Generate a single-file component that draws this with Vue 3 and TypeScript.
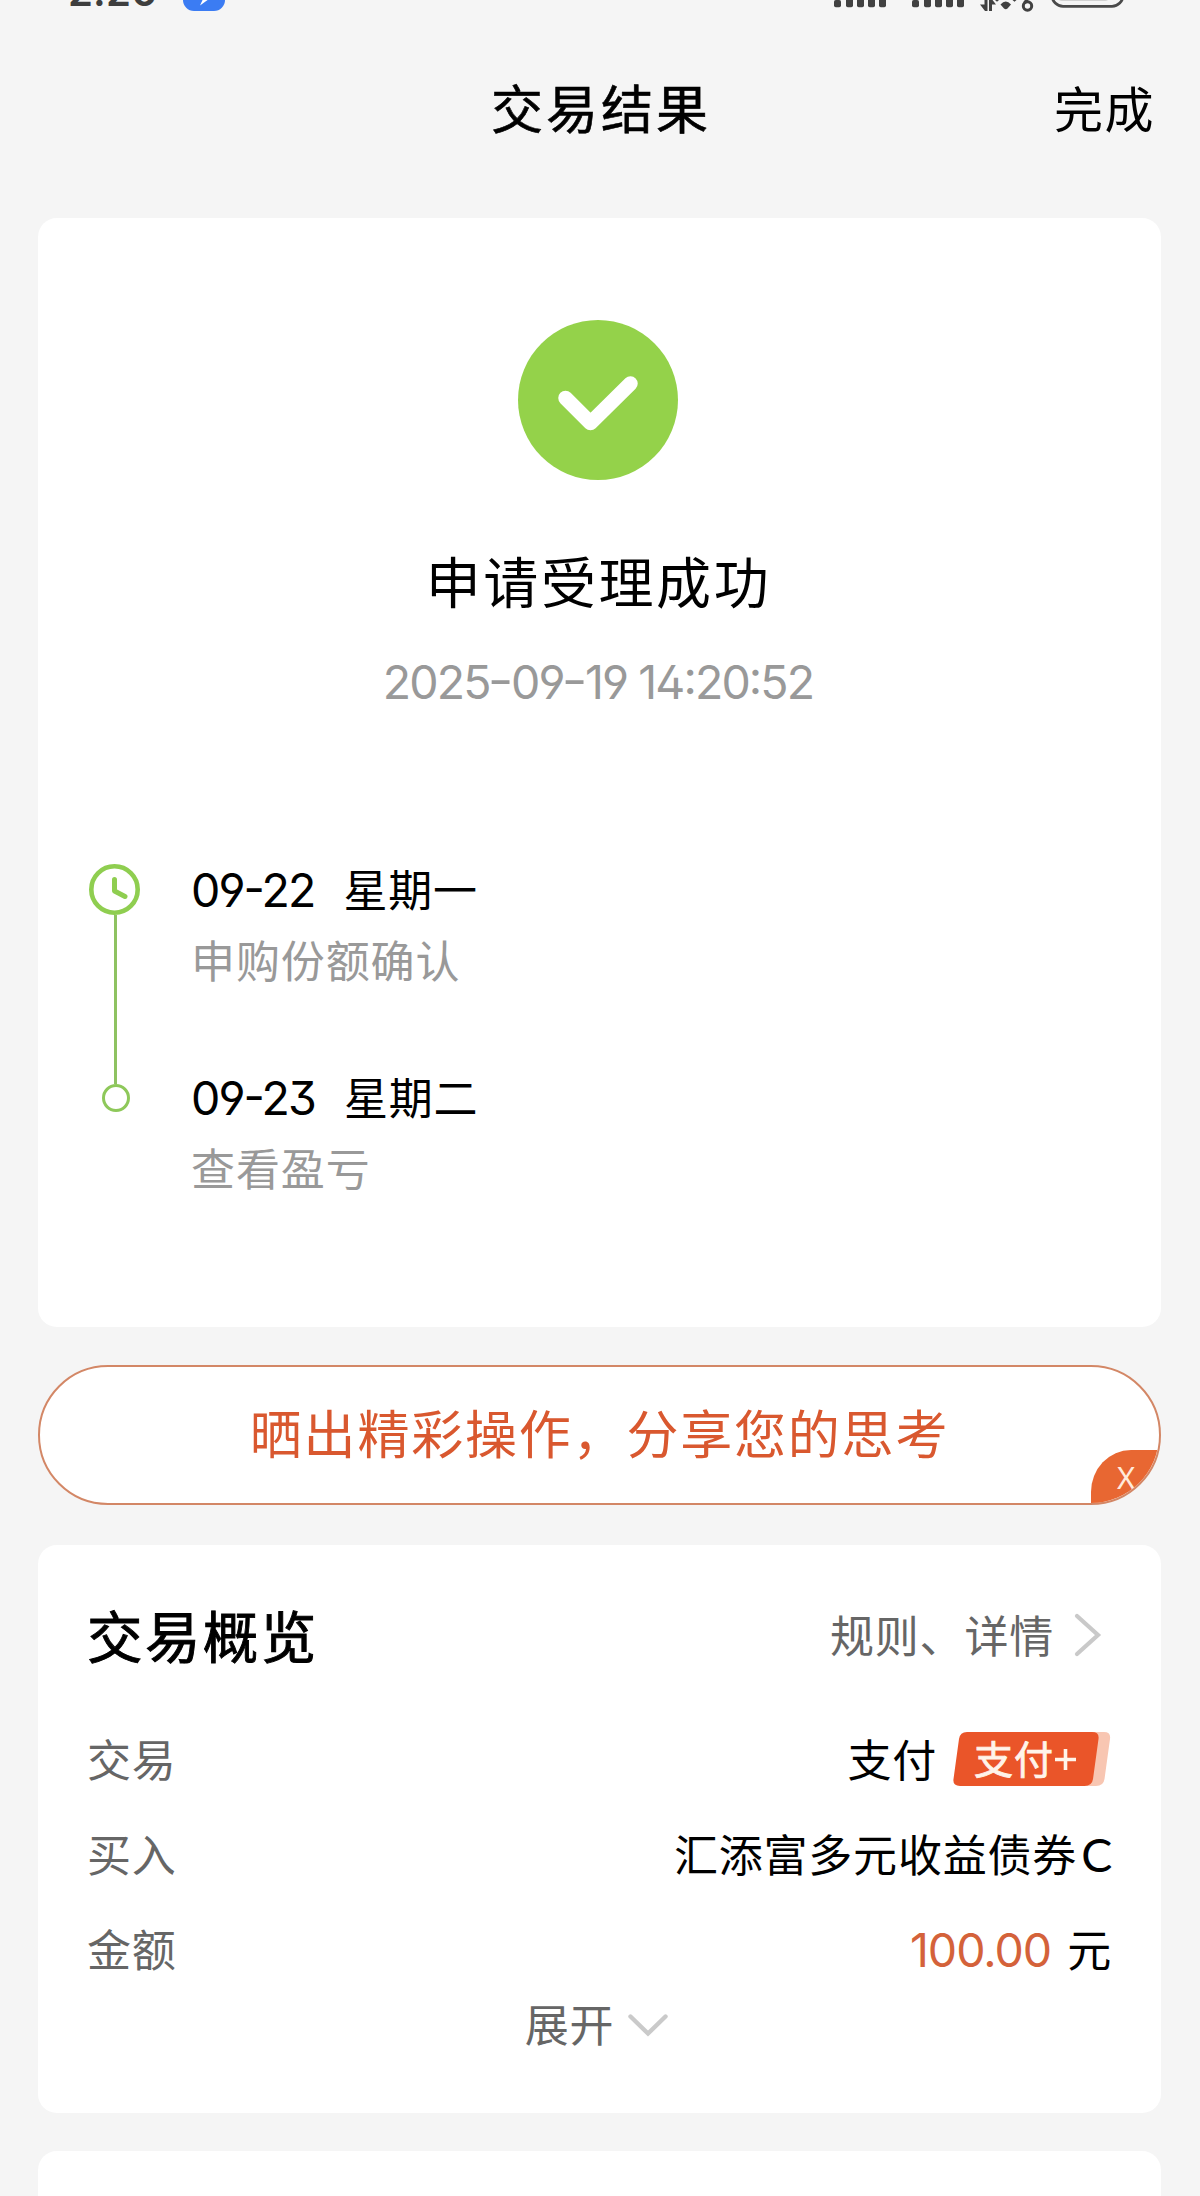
<script setup lang="ts">
interface Step {
  date: string
  weekday: string
  label: string
}

const steps: Step[] = [
  { date: '09-22', weekday: '星期一', label: '申购份额确认' },
  { date: '09-23', weekday: '星期二', label: '查看盈亏' },
]

const signalBars: number[] = [34, 46, 57, 68, 79]
</script>

<template>
  <div class="page">
    <div class="status">
      <span class="clock">2:20</span>
      <svg class="app-badge" width="42" height="12" viewBox="0 0 42 12">
        <rect x="0" y="-30" width="42" height="41" rx="11" fill="#3b7cf3" />
        <path d="M17 5.500 L20 -1 L26 -1 Z" fill="#fff" />
      </svg>
      <svg class="indicators" width="330" height="14" viewBox="0 0 330 14">
        <g fill="#414141">
          <g v-for="offset in [0, 78]" :key="offset" :transform="`translate(${offset} 0)`">
            <rect
              v-for="(x, i) in signalBars"
              :key="x"
              :x="x"
              :y="i === 0 ? 0 : -14"
              width="7"
              :height="i === 0 ? 7.3 : 21.3"
              rx="1.8"
            />
          </g>
          <path d="M180 4.500 L184.500 4.500 L184.500 -2 L187.500 -2 L187.500 11 L185 11 Z" />
          <path d="M189 11 L189 -2 L191 -2 L196 4.500 L192 4.500 L192 11 Z" />
          <path d="M200.500 4.500 Q205.800 -1.500 211 4.500 L207.500 8.500 Q205.800 10 204 8.500 Z" />
          <path d="M195 0 L199 0 L197 1.800 Z M212.500 0 L216.500 0 L214.500 1.800 Z" />
        </g>
        <path d="M229 -3 L224.500 3" stroke="#414141" stroke-width="3" fill="none" />
        <circle cx="227.500" cy="6" r="4.200" fill="none" stroke="#414141" stroke-width="3" />
        <rect x="252" y="-28" width="71" height="34.300" rx="11" fill="#f5f5f5" stroke="#4a4a4a" stroke-width="2.800" />
        <rect x="257" y="-22" width="53" height="23" rx="5" fill="#d2d2d2" />
      </svg>
    </div>

    <header class="header">
      <h1>交易结果</h1>
      <button class="done" type="button">完成</button>
    </header>

    <section class="card result">
      <div class="summary">
        <svg width="160" height="160" viewBox="0 0 160 160">
          <circle cx="80" cy="80" r="80" fill="#94d24a" />
          <path
            d="M47.500 78 L72.500 103 L112.500 63.500"
            fill="none"
            stroke="#fff"
            stroke-width="14.500"
            stroke-linecap="round"
            stroke-linejoin="round"
          />
        </svg>
        <h2>申请受理成功</h2>
        <time>2025<i>-</i>09<i>-</i>19 14:20:52</time>
      </div>

      <div class="timeline">
        <div class="rail">
          <svg width="51" height="51" viewBox="0 0 51 51" fill="none" stroke="#8fce50">
            <circle cx="25.500" cy="25.500" r="23.200" stroke-width="4.600" />
            <path d="M25.500 15.500 V27 L36 32.500" stroke-width="5" stroke-linecap="round" stroke-linejoin="round" />
          </svg>
          <span class="line"></span>
          <span class="dot"></span>
        </div>
        <div class="steps">
          <div v-for="step in steps" :key="step.date" class="step">
            <p class="when"><span class="num">{{ step.date }}</span><span class="weekday">{{ step.weekday }}</span></p>
            <p class="what">{{ step.label }}</p>
          </div>
        </div>
      </div>
    </section>

    <section class="share">
      <span>晒出精彩操作，分享您的思考</span>
      <button class="close" type="button">X</button>
    </section>

    <section class="card overview">
      <div class="overview-head">
        <h2>交易概览</h2>
        <a class="rules">
          <span>规则、详情</span>
          <svg width="28" height="44" viewBox="0 0 28 44">
            <path d="M3 3 L24 22 L3 41" fill="none" stroke="#c9c9c9" stroke-width="4.200" stroke-linecap="round" />
          </svg>
        </a>
      </div>
      <div class="row">
        <span class="label">交易</span>
        <span class="value">
          支付
          <svg class="pay" width="158" height="54" viewBox="0 0 158 54">
            <path d="M28 0 H151 Q158 0 157 7 L151.500 47 Q150.500 54 143 54 H28 Z" fill="#f8c6b2" />
            <path d="M14 0 H139 Q146.500 0 145.500 7 L140 47 Q139 54 131.500 54 H7 Q-0.500 54 0.500 47 L6 7 Q7 0 14 0 Z" fill="#ea5529" />
            <text x="21" y="42" class="pay-text">支付</text>
            <path d="M102 27.500 H123 M112.500 17 V38" stroke="#fff4ea" stroke-width="3.600" fill="none" />
          </svg>
        </span>
      </div>
      <div class="row">
        <span class="label">买入</span>
        <span class="value">汇添富多元收益债券<span class="share-class">C</span></span>
      </div>
      <div class="row">
        <span class="label">金额</span>
        <span class="value"><span class="amount">100.00</span>元</span>
      </div>
      <div class="expand">
        <span>展开</span>
        <svg width="40" height="24" viewBox="0 0 40 24">
          <path d="M2.500 2.500 L20 19.500 L37.500 2.500" fill="none" stroke="#cacaca" stroke-width="4.400" stroke-linecap="round" />
        </svg>
      </div>
    </section>

    <section class="card next"></section>
  </div>
</template>

<style>
body {
  margin: 0;
  background: #f5f5f5;
}
</style>

<style scoped>
.page {
  width: 1200px;
  height: 2196px;
  overflow: hidden;
  box-sizing: border-box;
  padding: 0 39px 0 38px;
  background: #f5f5f5;
  color: #000;
  font-family: Inter, 'Noto Sans CJK SC', sans-serif;
  font-size: 44px;
  letter-spacing: 0.8px;
}

h1,
h2,
p {
  margin: 0;
  font-weight: 400;
}

button {
  border: 0;
  padding: 0;
  background: none;
  font-family: inherit;
}

.status {
  height: 20px;
  display: flex;
  align-items: flex-start;
  overflow: hidden;
  margin: 0 -39px 0 -38px;
  padding-left: 68px;
}

.clock {
  width: 115px;
  margin-top: -31px;
  font-size: 40px;
  line-height: 46px;
  font-weight: 600;
  letter-spacing: 0.2px;
  color: #3e3e3e;
}

.app-badge {
  flex: none;
}

.indicators {
  flex: none;
  margin-left: 575px;
}

.header {
  display: grid;
  grid-template-columns: 1fr auto 1fr;
  align-items: center;
  height: 176px;
  box-sizing: border-box;
  margin-right: -39px;
  margin-left: -38px;
  padding: 5px 45px 0;
}

.header h1 {
  grid-column: 2;
  font-size: 52px;
  line-height: 76px;
  letter-spacing: 3px;
  padding-left: 2px;
  -webkit-text-stroke: 0.6px currentColor;
}

.done {
  justify-self: end;
  font-size: 49px;
  line-height: 76px;
  letter-spacing: 1.5px;
  color: #000;
}

.card {
  background: #fff;
  border-radius: 19px;
}

.result {
  height: 1109px;
  box-sizing: border-box;
  margin-top: 22px;
  padding-top: 102px;
}

.summary {
  display: flex;
  flex-direction: column;
  align-items: center;
  padding-right: 3px;
}

.summary h2 {
  margin-top: 63px;
  padding-left: 1px;
  font-size: 55px;
  line-height: 80px;
  letter-spacing: 2.6px;
}

.summary time {
  margin-top: 29px;
  font-size: 46.5px;
  line-height: 60px;
  letter-spacing: -1.9px;
  font-feature-settings: 'ss01', 'case';
  color: #999;
}

.summary time i {
  display: inline-block;
  font-style: normal;
  letter-spacing: 0;
  transform: scaleX(1.2);
}

.timeline {
  display: flex;
  margin-top: 148px;
  padding-left: 51px;
}

.rail {
  display: flex;
  flex-direction: column;
  width: 102px;
  padding-top: 4px;
}

.rail svg {
  display: block;
}

.line {
  width: 3px;
  height: 169px;
  margin-left: 25px;
  background: #8ec261;
}

.dot {
  width: 22px;
  height: 22px;
  margin-left: 13px;
  border: 3px solid #8ec85a;
  border-radius: 50%;
}

.step {
  height: 208px;
}

.when {
  line-height: 60px;
}

.num {
  font-size: 46.5px;
  letter-spacing: -1.9px;
  font-feature-settings: 'ss01', 'case';
}

.weekday {
  margin-left: 29px;
}

.what {
  margin-top: 16px;
  line-height: 50px;
  letter-spacing: 0.9px;
  color: #999;
}

.share {
  position: relative;
  display: flex;
  align-items: center;
  justify-content: center;
  height: 140px;
  box-sizing: border-box;
  margin-top: 38px;
  padding-bottom: 7px;
  overflow: hidden;
  border: 2px solid #d38766;
  border-radius: 70px;
  background: #fff;
  color: #d9582f;
  font-size: 52px;
  letter-spacing: 1.8px;
}

.close {
  position: absolute;
  right: -2px;
  bottom: -1px;
  width: 70px;
  height: 54px;
  border-top-left-radius: 40px 42px;
  background: #e86732;
  color: #ffeadb;
  font-family: 'Noto Sans', sans-serif;
  font-size: 31px;
  line-height: 52px;
  text-align: center;
}

.overview {
  height: 568px;
  box-sizing: border-box;
  margin-top: 40px;
  padding: 49px 49px 0;
}

.overview-head {
  display: flex;
  align-items: center;
  justify-content: space-between;
  height: 80px;
  margin-bottom: 39px;
}

.overview-head h2 {
  font-size: 55.5px;
  letter-spacing: 2.4px;
  -webkit-text-stroke: 0.9px currentColor;
}

.rules {
  display: flex;
  align-items: center;
  gap: 20px;
  padding-right: 10px;
  color: #666;
}

.rules svg {
  margin-top: 2px;
}

.row {
  display: flex;
  align-items: center;
  justify-content: space-between;
  height: 95px;
  line-height: 60px;
}

.label {
  color: #666;
}

.value {
  display: flex;
  align-items: center;
}

.pay {
  margin-left: 16px;
  margin-right: 1px;
  margin-bottom: 4px;
}

.pay-text {
  font-size: 39px;
  letter-spacing: 1px;
  fill: #fff4ea;
  stroke: #fff4ea;
  stroke-width: 0.8px;
}

.share-class {
  margin-left: 4px;
  margin-right: -1px;
  margin-bottom: 3px;
  font-family: Lato, sans-serif;
  font-size: 46.5px;
}

.amount {
  margin-right: 16px;
  margin-bottom: 1px;
  font-size: 46.5px;
  letter-spacing: -1px;
  color: #d4623a;
}

.expand {
  display: flex;
  align-items: center;
  justify-content: center;
  gap: 14px;
  height: 50px;
  padding-right: 6px;
  color: #666;
}

.expand svg {
  margin-top: 6px;
}

.next {
  height: 100px;
  margin-top: 38px;
}
</style>
